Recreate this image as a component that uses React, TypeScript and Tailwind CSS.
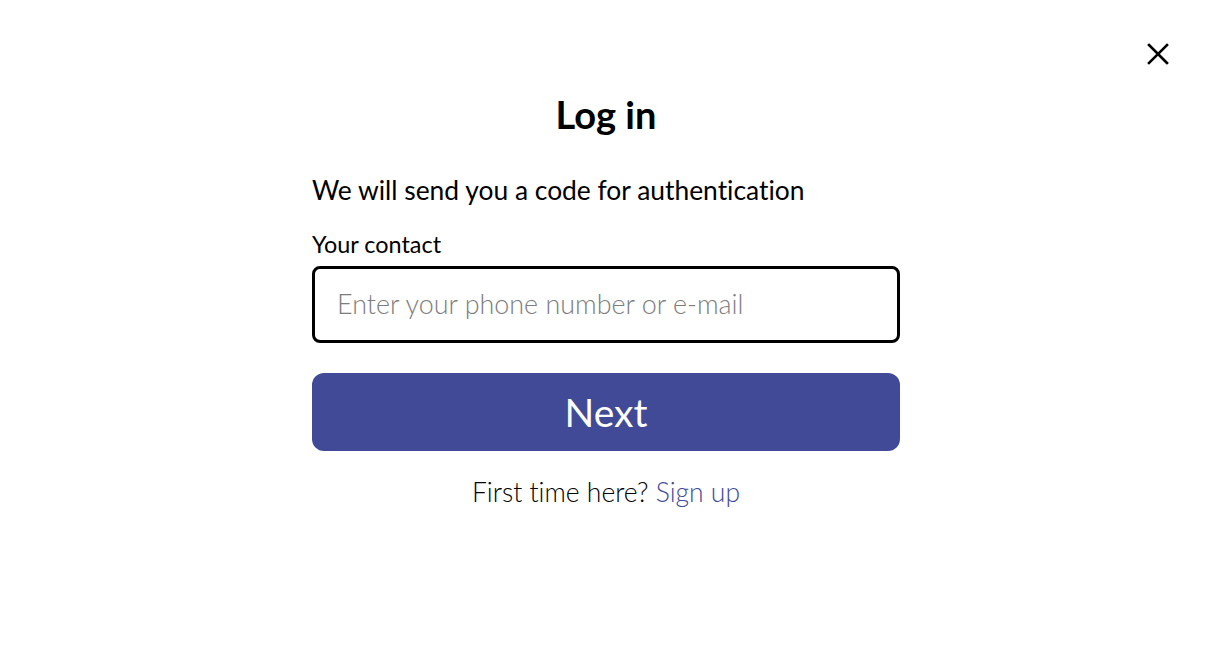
import React from "react";

export default function App() {
  return (
    <div className="relative min-h-[665px] w-full bg-white text-black [font-variant-ligatures:none]" style={{ fontFamily: "Lato, 'Noto Sans', sans-serif" }}>
      <button className="absolute right-[40px] top-[40px] flex h-[28px] w-[28px] items-center justify-center">
        <svg width="22" height="22" viewBox="0 0 22 22" fill="none" stroke="black" strokeWidth="2.6" strokeLinecap="square">
          <path d="M2 2L20 20M20 2L2 20" />
        </svg>
      </button>
      <div className="mx-auto flex w-[588px] flex-col pt-[90px]">
        <h1 className="text-center text-[38px] font-bold leading-[48px]">Log in</h1>
        <p className="mt-[36px] text-[26.4px] leading-[32px]">We will send you a code for authentication</p>
        <label className="mt-[24px] text-[23.4px] leading-[28px]">Your contact</label>
        <div className="mt-[8px] flex h-[77px] items-center rounded-[8px] border-[3px] border-black px-[22px]">
          <input
            className="w-full bg-transparent text-[26.9px] font-light text-black outline-none placeholder:text-[#7d7d7d]"
            placeholder="Enter your phone number or e-mail"
            style={{ fontFamily: "Lato, 'Noto Sans', sans-serif" }}
          />
        </div>
        <button className="mt-[30px] flex h-[78px] items-center justify-center rounded-[12px] bg-[#404a97] text-[39px] text-white">
          Next
        </button>
        <p className="mt-[25px] text-center text-[26.5px] font-light leading-[32px]">
          First time here? <span className="text-[#3f4a9a]">Sign up</span>
        </p>
      </div>
    </div>
  );
}
